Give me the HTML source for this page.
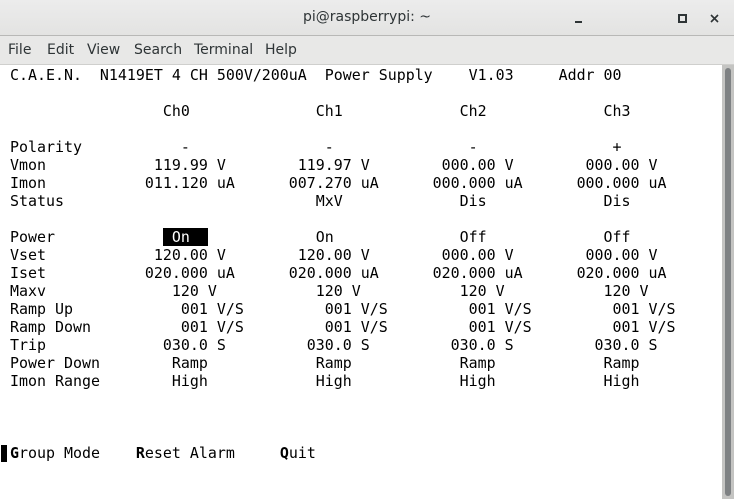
<!DOCTYPE html>
<html><head><meta charset="utf-8"><style>
*{margin:0;padding:0;box-sizing:border-box}
body{width:734px;height:499px;overflow:hidden;background:#fff;position:relative;font-family:"DejaVu Sans","Liberation Sans",sans-serif}
#title{position:absolute;left:0;top:0;width:734px;height:36px;background:linear-gradient(#ececec,#e3e3e2);border-bottom:1px solid #b8b8b6}
#title .t{position:absolute;left:0;width:734px;top:9px;text-align:center;font-size:14px;color:#2e3436}
#menu{position:absolute;left:0;top:36px;width:734px;height:29px;background:#e8e8e7;border-bottom:1px solid #cfcfcd}
#menu span{position:absolute;top:6px;font-size:14px;color:#2e3436}
pre{position:absolute;left:10px;top:66px;font-family:"DejaVu Sans Mono","Liberation Mono",monospace;font-size:14.95px;line-height:18px;color:#000}
.hl{background:#000;color:#fff}
#sb{position:absolute;left:722px;top:65px;width:12px;height:434px;background:#c4c4c2}
#th{position:absolute;left:725px;top:68px;width:6px;height:428px;background:#7e8183;border-radius:3px}
#cur{position:absolute;left:1px;top:445px;width:6px;height:17px;background:#000}
</style></head><body>
<div id="title"><div class="t">pi@raspberrypi: ~</div>
<svg style="position:absolute;left:570px;top:10px" width="160" height="20">
<rect x="5" y="11" width="7" height="2" fill="#2e3436"/>
<rect x="109" y="5" width="7" height="7" fill="none" stroke="#2e3436" stroke-width="2"/>
<path d="M141 5 L148 12 M148 5 L141 12" stroke="#2e3436" stroke-width="1.6"/>
</svg></div>
<div id="menu"><span style="left:8px">File</span><span style="left:47px">Edit</span><span style="left:87px">View</span><span style="left:134px">Search</span><span style="left:194px">Terminal</span><span style="left:265px">Help</span></div>
<pre>C.A.E.N.  N1419ET 4 CH 500V/200uA  Power Supply    V1.03     Addr 00

                 Ch0              Ch1             Ch2             Ch3

Polarity           -               -               -               +
Vmon            119.99 V        119.97 V        000.00 V        000.00 V
Imon           011.120 uA      007.270 uA      000.000 uA      000.000 uA
Status                            MxV             Dis             Dis

Power            <span class="hl"> On  </span>            On              Off             Off
Vset            120.00 V        120.00 V        000.00 V        000.00 V
Iset           020.000 uA      020.000 uA      020.000 uA      020.000 uA
Maxv              120 V           120 V           120 V           120 V
Ramp Up            001 V/S         001 V/S         001 V/S         001 V/S
Ramp Down          001 V/S         001 V/S         001 V/S         001 V/S
Trip             030.0 S         030.0 S         030.0 S         030.0 S
Power Down        Ramp            Ramp            Ramp            Ramp
Imon Range        High            High            High            High



<b>G</b>roup Mode    <b>R</b>eset Alarm     <b>Q</b>uit</pre>
<div id="cur"></div>
<div id="sb"></div><div id="th"></div>
</body></html>
